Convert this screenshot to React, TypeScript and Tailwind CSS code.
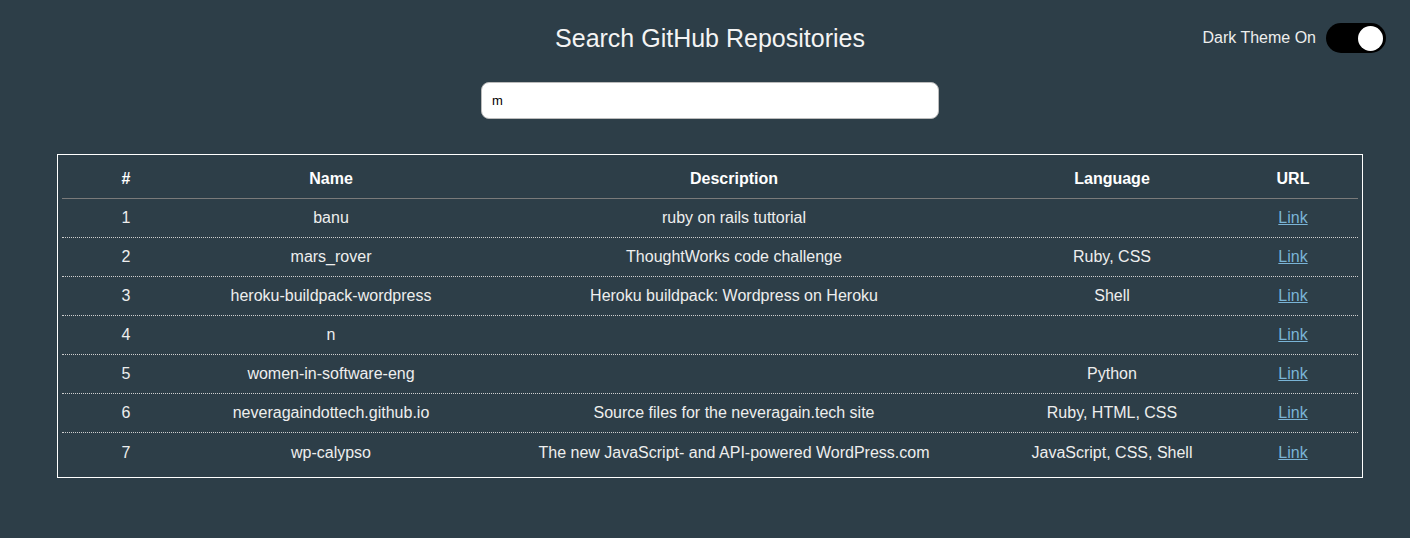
import { useState } from "react";

type Repo = {
  name: string;
  description: string;
  language: string;
};

const repos: Repo[] = [
  { name: "banu", description: "ruby on rails tuttorial", language: "" },
  { name: "mars_rover", description: "ThoughtWorks code challenge", language: "Ruby, CSS" },
  { name: "heroku-buildpack-wordpress", description: "Heroku buildpack: Wordpress on Heroku", language: "Shell" },
  { name: "n", description: "", language: "" },
  { name: "women-in-software-eng", description: "", language: "Python" },
  { name: "neveragaindottech.github.io", description: "Source files for the neveragain.tech site", language: "Ruby, HTML, CSS" },
  { name: "wp-calypso", description: "The new JavaScript- and API-powered WordPress.com", language: "JavaScript, CSS, Shell" },
];

const cols = "grid grid-cols-[128px_282px_524px_232px_1fr]";

const App = () => {
  const [query, setQuery] = useState("m");
  const [dark, setDark] = useState(true);

  return (
    <div className="min-h-[538px] bg-[#2d3e48] text-white font-['Liberation_Sans',Arial,sans-serif] pl-[10px]">
      <header className="grid grid-cols-[1fr_auto_1fr] items-center pt-[22px] pl-[24px] pr-[24px]">
        <div />
        <h1 className="text-[25px] leading-[32px] text-[#f4f4f4]">Search GitHub Repositories</h1>
        <div className="flex items-center justify-end gap-[10px]">
          <span className="text-[16px] text-[#eeeeee]">Dark Theme {dark ? "On" : "Off"}</span>
          <button
            onClick={() => setDark(!dark)}
            className="w-[60px] h-[30px] rounded-full bg-black flex items-center justify-end px-[3px]"
          >
            <span className="w-[25px] h-[25px] rounded-full bg-white block" />
          </button>
        </div>
      </header>

      <div className="flex justify-center mt-[28px]">
        <input
          value={query}
          onChange={(e) => setQuery(e.target.value)}
          className="w-[458px] h-[37px] rounded-[8px] bg-white border border-[#bbbbbb] px-[10px] text-[13px] text-black outline-none"
        />
      </div>

      <div className="mx-[47px] mt-[35px] border border-white px-[4px] pt-[5px] pb-[5px]">
        <div className={`${cols} h-[39px] items-center border-b border-[#7a7a7a] font-bold text-[16px] text-center`}>
          <div>#</div>
          <div>Name</div>
          <div>Description</div>
          <div>Language</div>
          <div>URL</div>
        </div>
        {repos.map((repo, i) => (
          <div
            key={repo.name}
            className={`${cols} h-[39px] items-center text-center text-[16px] text-[#eeeeee] ${
              i < repos.length - 1 ? "border-b border-dotted border-[#cfcfcf]" : ""
            }`}
          >
            <div>{i + 1}</div>
            <div>{repo.name}</div>
            <div>{repo.description}</div>
            <div>{repo.language}</div>
            <div>
              <a href="#" className="text-[#7ab4d6] underline">
                Link
              </a>
            </div>
          </div>
        ))}
      </div>
    </div>
  );
};

export default App;
